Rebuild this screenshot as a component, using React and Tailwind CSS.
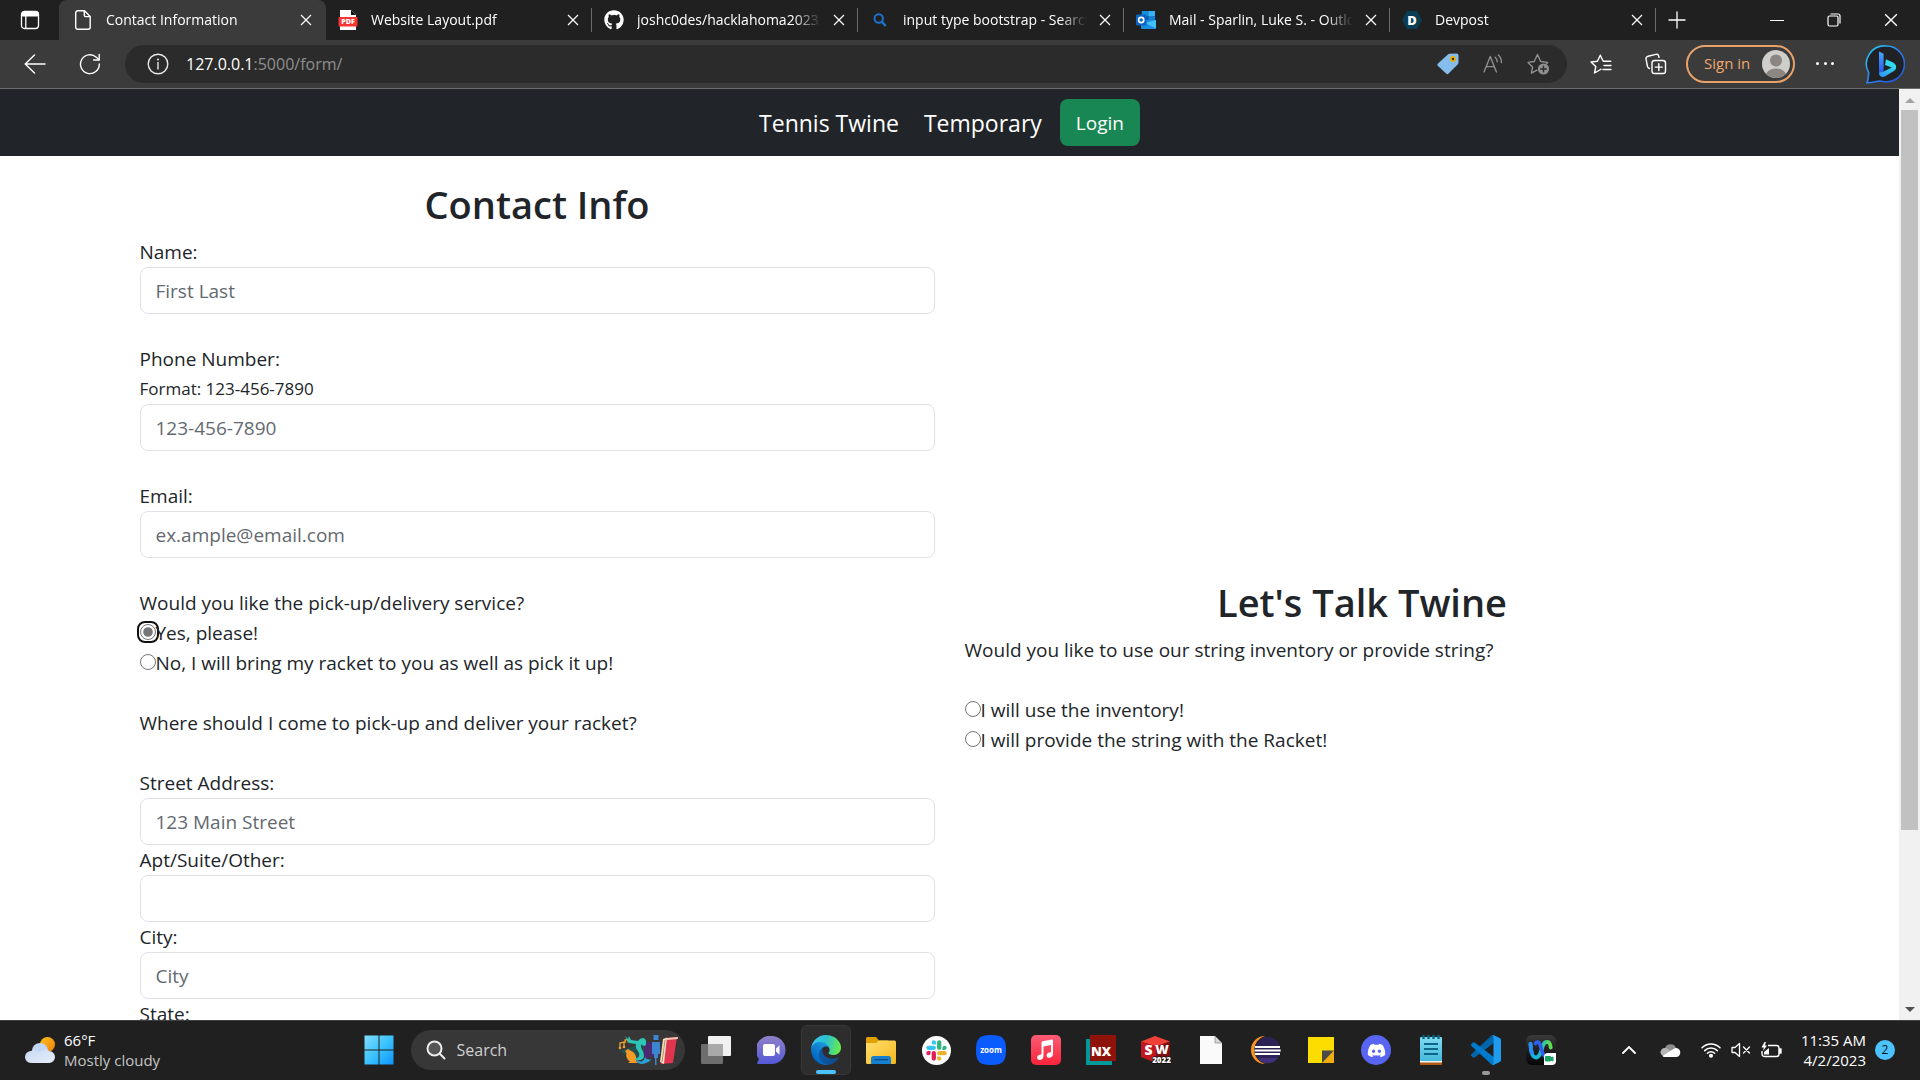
import React, { useState } from "react";
import { FaGithub, FaDiscord } from "react-icons/fa";

/* ---------- browser icons ---------- */

function TabActionsIcon() {
  return (
    <svg width="20" height="20" viewBox="0 0 20 20" fill="none" stroke="#fff">
      <rect x="1.5" y="1.5" width="17" height="17" rx="3" strokeWidth="1.3" />
      <path d="M1.5 6V4.5a3 3 0 0 1 3-3h11a3 3 0 0 1 3 3V6z" fill="#fff" />
      <path d="M5.8 6v12.5" strokeWidth="1.3" />
    </svg>
  );
}

function PageIcon() {
  return (
    <svg width="16" height="20" viewBox="0 0 16 20" fill="none" stroke="#fff" strokeWidth="1.4" strokeLinejoin="round">
      <path d="M2.7.8h6.8l5.7 5.6v10.9a2 2 0 0 1-2 2H2.7a2 2 0 0 1-2-2V2.8a2 2 0 0 1 2-2z" />
      <path d="M9.3 1v4a1.6 1.6 0 0 0 1.6 1.6h4" />
    </svg>
  );
}

function PdfIcon() {
  return (
    <svg width="20" height="20" viewBox="0 0 20 20">
      <path d="M2 0h11l5 5v15H2z" fill="#fff" />
      <path d="M13 0l5 5h-5z" fill="#111" />
      <rect x="0.5" y="7" width="19" height="9.5" rx="1" fill="#f93434" />
      <text x="10" y="14.2" fontSize="7" fontWeight="800" fill="#fff" textAnchor="middle" fontFamily="Open Sans, sans-serif">PDF</text>
    </svg>
  );
}

function BlueSearchIcon() {
  return (
    <svg width="14" height="14" viewBox="0 0 14 14" fill="none" stroke="#1a73d0" strokeWidth="2">
      <circle cx="5.7" cy="5.5" r="4.2" />
      <path d="M8.8 8.8l4 4.2" strokeWidth="2.4" />
    </svg>
  );
}

function OutlookIcon() {
  return (
    <svg width="20" height="20" viewBox="0 0 20 20">
      <rect x="5.5" y="1" width="13.5" height="11" rx="1" fill="#0a5aa8" />
      <rect x="6" y="1" width="6.5" height="5" fill="#1490df" />
      <rect x="12.5" y="1" width="6.5" height="5" fill="#35b2f2" />
      <rect x="12.5" y="6" width="6.5" height="5" fill="#1681d4" />
      <path d="M5 10l15 0v8a1 1 0 0 1-1 1H6a1 1 0 0 1-1-1z" fill="#1a8fe3" />
      <path d="M20 10v8.5L9 13z" fill="#45c0f7" />
      <rect x="0" y="4.5" width="10.5" height="11" rx="1" fill="#0a66c2" />
      <circle cx="5.2" cy="10" r="2.6" fill="none" stroke="#fff" strokeWidth="1.6" />
    </svg>
  );
}

function DevpostIcon() {
  return (
    <svg width="20" height="18" viewBox="0 0 20 18">
      <path d="M5 0h10l5 9-5 9H5L0 9z" fill="#0a3e54" />
      <text x="10" y="13.6" fontSize="13" fontWeight="800" fill="#fff" textAnchor="middle" fontFamily="Open Sans, sans-serif">D</text>
    </svg>
  );
}

function CloseIcon({ size = 12 }) {
  return (
    <svg width={size} height={size} viewBox="0 0 12 12" stroke="#fff" strokeWidth="1.2">
      <path d="M1 1l10 10M11 1L1 11" />
    </svg>
  );
}

function PlusIcon() {
  return (
    <svg width="18" height="18" viewBox="0 0 18 18" stroke="#fff" strokeWidth="1.3">
      <path d="M9 .5v17M.5 9h17" />
    </svg>
  );
}

function BackIcon() {
  return (
    <svg width="22" height="20" viewBox="0 0 22 20" fill="none" stroke="#fff" strokeWidth="1.4" strokeLinecap="round" strokeLinejoin="round">
      <path d="M21 10H1.5M10.5 1L1.2 10l9.3 9" />
    </svg>
  );
}

function ReloadIcon() {
  return (
    <svg width="22" height="22" viewBox="0 0 22 22" fill="none" stroke="#fff" strokeWidth="1.4" strokeLinecap="round" strokeLinejoin="round">
      <path d="M20.3 11a9.4 9.4 0 1 1-3-6.7l2.7 2.5" />
      <path d="M20.2 1.4v5.6h-5.6" />
    </svg>
  );
}

function InfoIcon() {
  return (
    <svg width="22" height="22" viewBox="0 0 22 22" fill="none" stroke="#e8e8e8" strokeWidth="1.4">
      <circle cx="11" cy="11" r="9.8" />
      <path d="M11 9.5V16" strokeLinecap="round" />
      <circle cx="11" cy="6.6" r="1" fill="#e8e8e8" stroke="none" />
    </svg>
  );
}

function TagIcon() {
  return (
    <svg width="22" height="22" viewBox="0 0 22 22">
      <path d="M12.5.8L19.5.6a2 2 0 0 1 2 2v7.2a2 2 0 0 1-.6 1.4L11.6 20.6a1.8 1.8 0 0 1-2.5 0L1 13a1.8 1.8 0 0 1 0-2.6l9.9-9a2.4 2.4 0 0 1 1.6-.6z" fill="#86bdec" />
      <circle cx="16" cy="6" r="2.9" fill="#e8b100" />
      <circle cx="16" cy="6" r="1.2" fill="#3b2f12" />
    </svg>
  );
}

function ReadAloudIcon() {
  return (
    <svg width="22" height="20" viewBox="0 0 22 20" fill="none" stroke="#8f8f8f" strokeWidth="1.4" strokeLinecap="round" strokeLinejoin="round">
      <path d="M2 18L8.3 2.5 14.4 18M4.2 12.6h8.2" />
      <path d="M13.2 3.2a6 6 0 0 1 2 4.6M16.4 1a10 10 0 0 1 3 7.6" />
    </svg>
  );
}

function StarAddIcon() {
  return (
    <svg width="23" height="22" viewBox="0 0 23 22" fill="none" stroke="#8f8f8f" strokeWidth="1.4" strokeLinejoin="round" strokeLinecap="round">
      <path d="M10 17.2l-5.6 3 1.2-6.3L1 9.4l6.2-.9L10.5 1.5l3.2 7 7 .9-2 2" />
      <circle cx="16.5" cy="16" r="5.6" fill="#8f8f8f" stroke="none" />
      <path d="M16.5 13.200v5.6M13.7 16h5.6" stroke="#2b2b2b" />
    </svg>
  );
}

function FavoritesIcon() {
  return (
    <svg width="22" height="20" viewBox="0 0 22 20" fill="none" stroke="#fff" strokeWidth="1.4" strokeLinejoin="round" strokeLinecap="round">
      <path d="M10.5 15.5l-6 3.5 1.3-6.5L1 8l6.4-.8L10.3 1.2l2.9 6h7.6M14 11.5h7M13 15.5h8M10.5 15.5l.5-.3" />
    </svg>
  );
}

function CollectionsIcon() {
  return (
    <svg width="22" height="22" viewBox="0 0 22 22" fill="none" stroke="#fff" strokeWidth="1.4" strokeLinecap="round" strokeLinejoin="round">
      <rect x="7" y="7.5" width="13.5" height="13" rx="2.6" />
      <path d="M13.8 10.6v7M10.3 14.1h7" />
      <path d="M4.5 15.5a3 3 0 0 1-2-2L1.1 6.3a2.5 2.5 0 0 1 1.9-3l7.8-1.9a2.5 2.5 0 0 1 3 1.8l.2 1.2" />
    </svg>
  );
}

function BingIcon() {
  return (
    <svg width="40" height="40" viewBox="0 0 40 40">
      <defs>
        <linearGradient id="bingRing" x1="0" y1="0" x2="1" y2="1">
          <stop offset="0" stopColor="#22d3ee" />
          <stop offset="0.5" stopColor="#2f80f0" />
          <stop offset="1" stopColor="#1d4ed8" />
        </linearGradient>
        <linearGradient id="bingStem" x1="0" y1="0" x2="0" y2="1">
          <stop offset="0" stopColor="#48a8ff" />
          <stop offset="1" stopColor="#2350e8" />
        </linearGradient>
        <linearGradient id="bingBowl" x1="1" y1="0" x2="0" y2="1">
          <stop offset="0" stopColor="#2fe3e8" />
          <stop offset="1" stopColor="#2f8cf5" />
        </linearGradient>
      </defs>
      <path d="M21 2a18 18 0 1 1-4.500 35.300c-4-1-8 1.700-14.500 1.400 1.700-3.500 1.200-6 1.700-10A18 18 0 0 1 21 2z" fill="#202124" stroke="url(#bingRing)" strokeWidth="1.6" />
      <path d="M14 7.500l4.600 2.200v17.100L14 31z" fill="url(#bingStem)" />
      <path d="M21 15.200l7 3.200a5.600 5.600 0 0 1 2.800 6.600L20 21z" fill="#2fd8ec" />
      <path d="M14 28.800c0 4 3.600 5 6.200 3.500l8.700-5.200a5 5 0 0 0 1.800-5.600l-11.500 5.800z" fill="url(#bingBowl)" />
    </svg>
  );
}

/* ---------- taskbar icons ---------- */

function WeatherIcon() {
  return (
    <svg width="30" height="26" viewBox="0 0 30 26">
      <defs>
        <linearGradient id="sun" x1="0" y1="0" x2="1" y2="1">
          <stop offset="0" stopColor="#fcc419" />
          <stop offset="1" stopColor="#f07c0c" />
        </linearGradient>
        <linearGradient id="cloud" x1="0" y1="0" x2="1" y2="1">
          <stop offset="0" stopColor="#c8d8f4" />
          <stop offset="1" stopColor="#e6eefb" />
        </linearGradient>
      </defs>
      <circle cx="22.5" cy="7.5" r="7.5" fill="url(#sun)" />
      <circle cx="15" cy="14" r="8" fill="#c3d5f5" />
      <path d="M6 14a6 6 0 0 1 8 1.500A7 7 0 0 1 24 14a6 6 0 0 1 0 12H6a6 6 0 0 1 0-12z" fill="url(#cloud)" />
    </svg>
  );
}

function WindowsIcon() {
  return (
    <svg width="30" height="30" viewBox="0 0 30 30">
      <defs>
        <linearGradient id="win" x1="0" y1="0" x2="30" y2="30" gradientUnits="userSpaceOnUse">
          <stop offset="0" stopColor="#84deff" />
          <stop offset="0.5" stopColor="#3cc3fc" />
          <stop offset="1" stopColor="#0a93fb" />
        </linearGradient>
      </defs>
      <path d="M.5.5h14v14H.5zM15.5.5h14v14h-14zM.5 15.5h14v14H.5zM15.5 15.5h14v14h-14z" fill="url(#win)" />
    </svg>
  );
}

function LensIcon() {
  return (
    <svg width="20" height="20" viewBox="0 0 20 20" fill="none" stroke="#ececec" strokeWidth="2" strokeLinecap="round">
      <circle cx="8.5" cy="8.5" r="7" fill="#555" />
      <path d="M13.8 13.8l4.7 4.7" />
    </svg>
  );
}

function SearchArt() {
  return (
    <svg width="62" height="32" viewBox="0 0 62 32">
      <path d="M2 17l26-9v13L12 24z" fill="#24504f" />
      <path d="M26 9l10-1v14l-10 3z" fill="#4b2a72" />
      <g stroke="#f2a22c" strokeWidth="1.3" fill="none">
        <path d="M2 14V9l4-1v5M7 9V6l3-.5v3" />
      </g>
      <circle cx="2" cy="14" r="1.3" fill="#f2a22c" />
      <circle cx="6" cy="13" r="1.3" fill="#f2a22c" />
      <path d="M7 17l3-2 3 2c4 1 6 6 5 10l2 2H10l2-1.500C8 25 8 21 8.500 19z" fill="#f59a23" />
      <path d="M7 2l3 3 1-3 2 4 7 1c3-4 7-4 8 0 .5 2 0 4-1 5-2 0-3-2-4-1-1 3 3 6 3 11 0 4-5 5-8 4l-1-2c3 0 5-1 4-5-1-3-4-4-3-9l-7-1-2-3z" fill="#2ec4b6" />
      <path d="M18 25c3 4 8 3 9-2 1 2 4 3 6 2-1 3-5 4-8 5-3 0-7-1-7-5z" fill="#2a9fd8" />
      <path d="M35.5 1h5v5h-5zM34 8h8v12h-2v4h-1.500v7h-1.500v-7H36v-4h-2z" fill="#3b86cf" />
      <path d="M47 4l12-1-4 26-12 1z" fill="#e0344f" />
      <path d="M45 5l4-1.500L46 30l-4-2z" fill="#f1dfc0" />
      <path d="M49 4l11-1-.3 2-11 1z" fill="#f7c9b4" />
      <path d="M47 6l-3 22" stroke="#9c6b4a" strokeWidth="0.7" />
    </svg>
  );
}

function TaskViewIcon() {
  return (
    <svg width="30" height="28" viewBox="0 0 30 28">
      <rect x="7" y="0" width="23" height="20" rx="1" fill="#f1f1f1" />
      <rect x="0" y="8" width="22" height="20" rx="1" fill="#7c7c7c" fillOpacity="0.85" />
      <path d="M7 8h15v12H7z" fill="#a9a9a9" />
    </svg>
  );
}

function ChatIcon() {
  return (
    <svg width="29" height="29" viewBox="0 0 29 29">
      <defs>
        <linearGradient id="chat" x1="0" y1="0" x2="0" y2="1">
          <stop offset="0" stopColor="#8f80c8" />
          <stop offset="1" stopColor="#5459d6" />
        </linearGradient>
      </defs>
      <path d="M14.500 0a14 14 0 0 1 0 28H1c-1 0-1.200-.800-.7-1.500L2 23A14 14 0 0 1 14.500 0z" fill="url(#chat)" />
      <rect x="6" y="8" width="12" height="12" rx="2" fill="#fff" />
      <path d="M19 12.500l3.500-3.200v9.400L19 15.500z" fill="#fff" />
    </svg>
  );
}

function EdgeIcon() {
  return (
    <svg width="30" height="30" viewBox="0 0 256 256">
      <defs>
        <linearGradient id="edgeA" x1="63" y1="177" x2="241" y2="177" gradientUnits="userSpaceOnUse">
          <stop offset="0" stopColor="#0c59a4" />
          <stop offset="1" stopColor="#114a8b" />
        </linearGradient>
        <linearGradient id="edgeB" x1="157" y1="90" x2="46" y2="220" gradientUnits="userSpaceOnUse">
          <stop offset="0" stopColor="#1b9de2" />
          <stop offset="0.5" stopColor="#1280d0" />
          <stop offset="1" stopColor="#0067c0" />
        </linearGradient>
        <linearGradient id="edgeC" x1="20" y1="60" x2="250" y2="110" gradientUnits="userSpaceOnUse">
          <stop offset="0" stopColor="#35c1f1" />
          <stop offset="0.5" stopColor="#2cc3c9" />
          <stop offset="1" stopColor="#66eb4b" />
        </linearGradient>
      </defs>
      <g transform="translate(-4.63 -4.92)">
        <path d="M235.680 195.460a93.730 93.730 0 0 1-10.540 4.710 101.870 101.870 0 0 1-35.900 6.460c-47.320 0-88.540-32.550-88.540-74.320A31.480 31.480 0 0 1 117.130 105c-42.800 1.800-53.800 46.400-53.800 72.530 0 73.880 68.090 81.370 82.760 81.370 7.910 0 19.840-2.300 27-4.560l1.310-.44a128.340 128.340 0 0 0 66.600-52.800 4 4 0 0 0-5.320-5.640Z" fill="url(#edgeA)" />
        <path d="M110.340 246.340A79.200 79.200 0 0 1 87.600 225a80.720 80.720 0 0 1 29.530-120c3.120-1.470 8.450-4.130 15.540-4a32.350 32.350 0 0 1 25.690 13 31.880 31.880 0 0 1 6.360 18.660c0-.21 24.460-79.600-80-79.600-43.900 0-80 41.660-80 78.210a130.150 130.150 0 0 0 12.110 56 128 128 0 0 0 156.380 67.110 75.550 75.550 0 0 1-62.780-8Z" fill="url(#edgeB)" />
        <path d="M156.940 153.780c-.81 1.050-3.300 2.500-3.300 5.660 0 2.610 1.700 5.120 4.720 7.230 14.380 10 41.490 8.680 41.560 8.680a59.560 59.560 0 0 0 30.270-8.350 61.380 61.380 0 0 0 30.430-52.880c.26-22.410-8-37.310-11.340-43.910C228.090 28.760 182.350 4.920 132.610 4.920a128 128 0 0 0-128 126.200c.48-36.540 36.800-66.050 80-66.050 3.500 0 23.460.34 42 10.070 16.340 8.580 24.900 18.940 30.850 29.210 6.180 10.670 7.280 24.150 7.280 29.520s-2.740 13.330-7.800 19.910Z" fill="url(#edgeC)" />
      </g>
    </svg>
  );
}

function FolderIcon() {
  return (
    <svg width="30" height="27" viewBox="0 0 30 27">
      <defs>
        <linearGradient id="folder" x1="0" y1="0" x2="1" y2="1">
          <stop offset="0" stopColor="#ffdf70" />
          <stop offset="1" stopColor="#f7b71c" />
        </linearGradient>
      </defs>
      <path d="M0 1.500A1.500 1.500 0 0 1 1.500 0H10l3 3.500H22V8H0z" fill="#e0a000" />
      <path d="M0 6h10l3-2.500h15.500A1.500 1.500 0 0 1 30 5v20.500a1.500 1.500 0 0 1-1.500 1.500h-27A1.500 1.500 0 0 1 0 25.500z" fill="url(#folder)" />
      <path d="M5 27v-5.500a2.500 2.500 0 0 1 2.500-2.500h15a2.500 2.500 0 0 1 2.500 2.500V27z" fill="#1580d0" />
      <path d="M9 22.700h12.500" stroke="#0b4c86" strokeWidth="1.2" strokeLinecap="round" />
    </svg>
  );
}

function SlackIcon() {
  return (
    <svg width="29" height="29" viewBox="0 0 34 34">
      <circle cx="17" cy="17" r="17" fill="#fff" />
      <g transform="translate(5 5)">
        <path fill="#E01E5A" d="M5.042 15.165a2.528 2.528 0 0 1-2.520 2.523A2.528 2.528 0 0 1 0 15.165a2.527 2.527 0 0 1 2.522-2.520h2.520v2.520zM6.313 15.165a2.527 2.527 0 0 1 2.521-2.520 2.527 2.527 0 0 1 2.521 2.520v6.313A2.528 2.528 0 0 1 8.834 24a2.528 2.528 0 0 1-2.521-2.522v-6.313z" />
        <path fill="#36C5F0" d="M8.834 5.042a2.528 2.528 0 0 1-2.521-2.520A2.528 2.528 0 0 1 8.834 0a2.528 2.528 0 0 1 2.521 2.522v2.520H8.834zM8.834 6.313a2.528 2.528 0 0 1 2.521 2.521 2.528 2.528 0 0 1-2.521 2.521H2.522A2.528 2.528 0 0 1 0 8.834a2.528 2.528 0 0 1 2.522-2.521h6.312z" />
        <path fill="#2EB67D" d="M18.956 8.834a2.528 2.528 0 0 1 2.522-2.521A2.528 2.528 0 0 1 24 8.834a2.528 2.528 0 0 1-2.522 2.521h-2.522V8.834zM17.688 8.834a2.528 2.528 0 0 1-2.523 2.521 2.527 2.527 0 0 1-2.520-2.521V2.522A2.527 2.527 0 0 1 15.165 0a2.528 2.528 0 0 1 2.523 2.522v6.312z" />
        <path fill="#ECB22E" d="M15.165 18.956a2.528 2.528 0 0 1 2.523 2.522A2.528 2.528 0 0 1 15.165 24a2.527 2.527 0 0 1-2.520-2.522v-2.522h2.520zM15.165 17.688a2.527 2.527 0 0 1-2.520-2.523 2.526 2.526 0 0 1 2.520-2.520h6.313A2.527 2.527 0 0 1 24 15.165a2.528 2.528 0 0 1-2.522 2.523h-6.313z" />
      </g>
    </svg>
  );
}

function ZoomIcon() {
  return (
    <svg width="30" height="30" viewBox="0 0 30 30">
      <path d="M15 0c12 0 15 4 15 15s-3 15-15 15S0 26 0 15 3 0 15 0z" fill="#0b5cff" />
      <text x="15" y="17.8" fontSize="8" fontWeight="700" fill="#fff" textAnchor="middle" fontFamily="Open Sans, sans-serif">zoom</text>
    </svg>
  );
}

function MusicIcon() {
  return (
    <svg width="30" height="30" viewBox="0 0 30 30">
      <defs>
        <linearGradient id="music" x1="0" y1="0" x2="0" y2="1">
          <stop offset="0" stopColor="#fb5c74" />
          <stop offset="1" stopColor="#fa233b" />
        </linearGradient>
      </defs>
      <rect width="30" height="30" rx="5" fill="url(#music)" />
      <path d="M10.500 7.500a1.300 1.300 0 0 1 1-1.200l9.300-1.900c.8-.1 1.200.3 1.200 1v13.200c0 2.700-1.400 3.900-3.200 4.200-2 .3-3.200-.9-3.200-2.400 0-1.600 1.200-2.500 2.700-2.800l1-.2c.5-.1.700-.4.700-.9V10l-7.500 1.600v9.200c0 2.700-1.400 3.900-3.200 4.200-2 .3-3.200-.9-3.200-2.400 0-1.600 1.200-2.500 2.700-2.800l1-.2c.5-.1.700-.4.700-.9z" fill="#fff" />
    </svg>
  );
}

function NxIcon() {
  return (
    <svg width="30" height="30" viewBox="0 0 30 30">
      <rect x="0" y="4" width="26" height="26" fill="#009999" />
      <rect x="4" y="0" width="26" height="26" fill="#8e130b" />
      <text x="15" y="21" fontSize="13" fontWeight="800" fill="#fff" textAnchor="middle" fontFamily="Open Sans, sans-serif">NX</text>
    </svg>
  );
}

function SolidWorksIcon() {
  return (
    <svg width="30" height="30" viewBox="0 0 30 30">
      <path d="M14 1l15 5.500-14 5L0 6.500z" fill="#f04038" />
      <path d="M0 6.500l15 5V28L0 22z" fill="#c11820" />
      <path d="M15 11.500l14-5V22L15 28z" fill="#7d0e14" />
      <text x="7.5" y="20" fontSize="14" fontWeight="800" fill="#fff" textAnchor="middle" fontFamily="Open Sans, sans-serif">S</text>
      <text x="21" y="19" fontSize="13" fontWeight="800" fill="#fff" textAnchor="middle" fontFamily="Open Sans, sans-serif">W</text>
      <text x="20.5" y="28" fontSize="8" fontWeight="800" fill="#fff" stroke="#111" strokeWidth="1.5" paintOrder="stroke" textAnchor="middle" fontFamily="Open Sans, sans-serif">2022</text>
    </svg>
  );
}

function BlankFileIcon() {
  return (
    <svg width="22" height="28" viewBox="0 0 22 28">
      <path d="M0 0h15l7 7v21H0z" fill="#fafafa" />
      <path d="M15 0v7h7z" fill="#d9d9d9" stroke="#777" strokeWidth="0.6" />
    </svg>
  );
}

function EclipseIcon() {
  return (
    <svg width="30" height="28" viewBox="0 0 30 28">
      <path d="M14 0A14 14 0 0 0 14 28 14.500 14.500 0 0 1 14 0z" fill="#f7941e" />
      <circle cx="16.5" cy="14" r="13" fill="#2c2255" />
      <path d="M6 22a13 13 0 0 0 21 0z" fill="#41307c" />
      <path d="M4 10h25v2H4zM3.500 13.500h26.200v2H3.500zM4 17h25v2H4z" fill="#fff" />
    </svg>
  );
}

function StickyIcon() {
  return (
    <svg width="26" height="26" viewBox="0 0 26 26">
      <path d="M0 0h26v14L14 26H0z" fill="#fddc00" />
      <path d="M14 26V13.500h12z" fill="#4a4a4a" />
      <path d="M14 26l12-12.500V26z" fill="#f0ad0c" />
    </svg>
  );
}

function DiscordIcon() {
  return (
    <span className="flex h-[30px] w-[30px] items-center justify-center rounded-full bg-[#5865f2] text-white">
      <FaDiscord size={19} />
    </span>
  );
}

function NotepadIcon() {
  return (
    <svg width="22" height="30" viewBox="0 0 22 30">
      <defs>
        <linearGradient id="note" x1="0" y1="0" x2="0" y2="1">
          <stop offset="0" stopColor="#80dbf0" />
          <stop offset="1" stopColor="#45b9dc" />
        </linearGradient>
      </defs>
      <rect x="0" y="25" width="22" height="5" fill="#b25a12" />
      <rect x="0" y="24" width="22" height="3.5" fill="#f4f4f4" />
      <rect x="0" y="2" width="22" height="24" rx="1" fill="url(#note)" />
      <path d="M3.500 0v4M8.500 0v4M13.500 0v4M18.500 0v4" stroke="#0b6586" strokeWidth="2.4" />
      <path d="M4 9h14M4 14h14M4 19h14" stroke="#0b6586" strokeWidth="1.8" />
    </svg>
  );
}

function VsCodeIcon() {
  return (
    <svg width="30" height="30" viewBox="0 0 100 100">
      <path fill="#0065A9" d="M96.461 10.796L75.857.876a6.230 6.230 0 0 0-7.107 1.207l-67.451 61.500a4.167 4.167 0 0 0 .004 6.162l5.510 5.009a4.167 4.167 0 0 0 5.320.236l81.228-61.620c2.725-2.067 6.639-.124 6.639 3.297v-.240a6.250 6.250 0 0 0-3.539-5.630z" />
      <path fill="#007ACC" d="M96.461 89.204l-20.604 9.920a6.229 6.229 0 0 1-7.107-1.207l-67.451-61.500a4.167 4.167 0 0 1 .004-6.162l5.510-5.009a4.167 4.167 0 0 1 5.320-.236l81.228 61.620c2.725 2.068 6.639.124 6.639-3.297v.240a6.250 6.250 0 0 1-3.539 5.630z" />
      <path fill="#1F9CF0" d="M75.858 99.126a6.232 6.232 0 0 1-7.108-1.210c2.306 2.307 6.250.673 6.250-2.588V4.672c0-3.262-3.944-4.895-6.250-2.589a6.232 6.232 0 0 1 7.108-1.210l20.600 9.908A6.250 6.250 0 0 1 100 16.413v67.174a6.250 6.250 0 0 1-3.541 5.633l-20.601 9.906z" />
    </svg>
  );
}

function WebexIcon() {
  return (
    <svg width="30" height="30" viewBox="0 0 30 30" fill="none">
      <defs>
        <linearGradient id="wxBg" x1="0" y1="0" x2="0" y2="1">
          <stop offset="0" stopColor="#3a3a3a" />
          <stop offset="1" stopColor="#050505" />
        </linearGradient>
        <linearGradient id="wxBand" x1="4" y1="0" x2="25" y2="0" gradientUnits="userSpaceOnUse">
          <stop offset="0" stopColor="#07b8f0" />
          <stop offset="0.5" stopColor="#1fb9c9" />
          <stop offset="1" stopColor="#63e04a" />
        </linearGradient>
      </defs>
      <rect width="30" height="30" rx="6" fill="url(#wxBg)" />
      <path d="M4.500 9c.3 8 2 13.500 5.500 13.500S15 17 16.500 12s3-5 5-5 2.700 2 3.200 5.500" stroke="url(#wxBand)" strokeWidth="3.8" strokeLinecap="round" />
      <path d="M4.500 9c.2 4 .7 7 1.500 9" stroke="#2b8cf5" strokeWidth="3.8" strokeLinecap="round" />
      <path d="M9.500 8.500c1-2 3.500-2 4.500 1 1.500 4 2.500 12 6 12.500" stroke="#2f5fee" strokeWidth="3.6" strokeLinecap="round" />
      <path d="M22 18h8v8a4 4 0 0 1-4 4h-8v-8a4 4 0 0 1 4-4z" fill="#fff" />
      <path d="M19.500 21.500h5v4.500h-5zM24.500 23l2.500-1v4l-2.500-1z" fill="#17a566" stroke="#17a566" strokeWidth="1" />
    </svg>
  );
}

function CloudTrayIcon() {
  return (
    <svg width="21" height="14" viewBox="0 0 21 14">
      <path d="M5 5a6 6 0 0 1 11-.5L10 9 2 12A4 4 0 0 1 5 5z" fill="#8e8e8e" />
      <path d="M1 11a4.500 4.500 0 0 1 5-6l7 4-9 5z" fill="#b5b5b5" />
      <path d="M2.500 13L15 5a4.500 4.500 0 0 1 1.500 9H4.500a4 4 0 0 1-2-1z" fill="#fff" />
    </svg>
  );
}

function WifiIcon() {
  return (
    <svg width="20" height="16" viewBox="0 0 20 16" fill="none" stroke="#fff" strokeWidth="1.5" strokeLinecap="round">
      <path d="M1 5.800a12.700 12.700 0 0 1 18 0M3.700 8.600a8.900 8.900 0 0 1 12.600 0M6.400 11.300a5.100 5.100 0 0 1 7.200 0" />
      <circle cx="10" cy="13.8" r="1.3" fill="#fff" />
    </svg>
  );
}

function MuteIcon() {
  return (
    <svg width="20" height="16" viewBox="0 0 20 16" fill="none" stroke="#fff" strokeWidth="1.3" strokeLinecap="round" strokeLinejoin="round">
      <path d="M1 5.500h3L8.500 1.500v13L4 10.500H1z" />
      <path d="M12.500 5l6 6M18.500 5l-6 6" />
    </svg>
  );
}

function BatteryIcon() {
  return (
    <svg width="21" height="16" viewBox="0 0 21 16" fill="none" stroke="#fff" strokeWidth="1.4" strokeLinejoin="round">
      <path d="M7 3.500h8.500a2.500 2.500 0 0 1 2.500 2.500v6a2.500 2.500 0 0 1-2.500 2.500h-12a2.500 2.500 0 0 1-2.500-2.500V9" />
      <path d="M18.500 7h1.500v4h-1.500z" fill="#fff" />
      <path d="M3 12.500V10l5-4v6.500z" fill="#fff" stroke="none" />
      <path d="M3.500 0L.5 5.500h2.300L2 9l4-5.500H3.800L5 0z" fill="#fff" stroke="none" />
    </svg>
  );
}

/* ---------- browser chrome ---------- */

const tabs = [
  { title: "Contact Information", icon: <PageIcon />, active: true },
  { title: "Website Layout.pdf", icon: <PdfIcon /> },
  { title: "joshc0des/hacklahoma2023:", icon: <FaGithub size={20} color="#fff" /> },
  { title: "input type bootstrap - Search", icon: <BlueSearchIcon /> },
  { title: "Mail - Sparlin, Luke S. - Outlook", icon: <OutlookIcon /> },
  { title: "Devpost", icon: <DevpostIcon /> },
];

function Tab({ title, icon, active }) {
  return (
    <div
      className={
        active
          ? "flex h-10 max-w-[267px] min-w-0 flex-1 items-center rounded-t-lg bg-[#3b3b3b] pr-[10px] pl-[14px]"
          : "flex h-10 max-w-[266px] min-w-0 flex-1 items-center pl-3"
      }
    >
      <span className="flex w-5 shrink-0 justify-center">{icon}</span>
      <span className="ml-[13px] min-w-0 flex-1 overflow-hidden mask-r-from-85% text-sm whitespace-nowrap text-white">{title}</span>
      <button type="button" aria-label={"Close " + title} className="ml-2 flex h-6 w-5 shrink-0 items-center justify-center">
        <CloseIcon />
      </button>
      {!active && <span className="ml-2 h-6 w-px bg-[#6b6b6b]" />}
    </div>
  );
}

function TabBar() {
  return (
    <div className="flex h-10 shrink-0 items-center bg-[#202020]">
      <button type="button" aria-label="Tab actions menu" className="flex h-10 w-[59px] shrink-0 items-center justify-center">
        <TabActionsIcon />
      </button>
      <div className="flex min-w-0 flex-1 items-center">
        {tabs.map((t) => (
          <Tab key={t.title} {...t} />
        ))}
        <button type="button" aria-label="New tab" className="ml-[11px] flex h-10 w-5 shrink-0 items-center justify-center">
          <PlusIcon />
        </button>
      </div>
      <div className="flex shrink-0">
        <button type="button" aria-label="Minimize" className="flex h-10 w-[57px] items-center justify-center">
          <span className="h-px w-3.5 bg-white" />
        </button>
        <button type="button" aria-label="Restore" className="flex h-10 w-[57px] items-center justify-center">
          <svg width="14" height="14" viewBox="0 0 14 14" fill="none" stroke="#fff" strokeWidth="1.2">
            <rect x="1" y="3" width="10" height="10" rx="1.5" />
            <path d="M3.500 1h7.500a2 2 0 0 1 2 2v7.500" />
          </svg>
        </button>
        <button type="button" aria-label="Close window" className="flex h-10 w-[58px] items-center justify-center">
          <CloseIcon size={14} />
        </button>
      </div>
    </div>
  );
}

function Toolbar() {
  return (
    <div className="flex h-[49px] shrink-0 items-center border-b border-[#6c6c6c] bg-[#3b3b3b] pb-px">
      <button type="button" aria-label="Back" className="ml-4 flex w-[37px] justify-center">
        <BackIcon />
      </button>
      <button type="button" aria-label="Refresh" className="ml-[18px] flex w-[37px] justify-center">
        <ReloadIcon />
      </button>
      <div className="ml-[17px] flex h-[38px] min-w-0 flex-1 items-center rounded-full bg-[#2b2b2b] pr-[17px] pl-[22px]">
        <button type="button" aria-label="View site information">
          <InfoIcon />
        </button>
        <a href="#form" className="ml-[17px] flex-1 text-base text-[#8f8f8f]">
          <span className="text-white">127.0.0.1</span>:5000/form/
        </a>
        <div className="flex items-center gap-[23px]">
          <button type="button" aria-label="Shopping"><TagIcon /></button>
          <button type="button" aria-label="Read aloud"><ReadAloudIcon /></button>
          <button type="button" aria-label="Add to favorites"><StarAddIcon /></button>
        </div>
      </div>
      <button type="button" aria-label="Favorites" className="ml-[23px]"><FavoritesIcon /></button>
      <button type="button" aria-label="Collections" className="ml-[33px]"><CollectionsIcon /></button>
      <button type="button" className="ml-[19px] flex h-[38px] w-[109px] items-center justify-between rounded-full border-2 border-[#e8a26b] pr-[3px] pl-4 text-[15px] text-[#f0a870]">
        Sign in
        <svg width="28" height="28" viewBox="0 0 28 28">
          <defs>
            <clipPath id="avatar"><circle cx="14" cy="14" r="14" /></clipPath>
          </defs>
          <g clipPath="url(#avatar)">
            <rect width="28" height="28" fill="#d0cecb" />
            <circle cx="14" cy="10.5" r="6" fill="#8b8682" />
            <ellipse cx="14" cy="26" rx="10.5" ry="7.5" fill="#8b8682" />
          </g>
        </svg>
      </button>
      <button type="button" aria-label="Settings and more" className="ml-[21px] flex h-6 w-[18px] items-center justify-between">
        <span className="h-[3px] w-[3px] rounded-full bg-white" />
        <span className="h-[3px] w-[3px] rounded-full bg-white" />
        <span className="h-[3px] w-[3px] rounded-full bg-white" />
      </button>
      <button type="button" aria-label="Discover" className="mr-[15px] ml-[31px]"><BingIcon /></button>
    </div>
  );
}

/* ---------- web page ---------- */

function TextField({ id, label, hint, placeholder, type = "text" }) {
  return (
    <div>
      <label htmlFor={id} className="block">{label}</label>
      {hint && <small className="block text-[17px]/[30px]">{hint}</small>}
      <input
        id={id}
        type={type}
        placeholder={placeholder}
        className="block h-[47px] w-full rounded-lg border border-[#dee2e6] bg-white px-[15px] placeholder:text-[#63696f]"
      />
    </div>
  );
}

function Radio({ name, value, label, checked, onChange, focused }) {
  return (
    <label className="flex items-center">
      <span
        className={
          focused
            ? "mb-0.5 h-4 w-4 shrink-0 rounded-[5px] outline-2 outline-offset-1 outline-[#101010]"
            : "mb-0.5 h-4 w-4 shrink-0"
        }
      >
        <input
          type="radio"
          name={name}
          value={value}
          checked={checked}
          onChange={onChange}
          className="block h-4 w-4 accent-[#767676]"
        />
      </span>
      {label}
    </label>
  );
}

function Form() {
  const [service, setService] = useState("yes");
  const [twine, setTwine] = useState("");
  return (
    <form className="mx-auto grid w-full max-w-[1650px] grid-cols-2 items-center pt-6">
      <div className="px-[15px] pb-[77px]">
        <h1 className="mb-[9px] text-center text-[38px]/[48px] font-semibold">Contact Info</h1>
        <div className="flex flex-col gap-[30px]">
          <TextField id="name" label="Name:" placeholder="First Last" />
          <TextField id="phone" type="tel" label="Phone Number:" hint="Format: 123-456-7890" placeholder="123-456-7890" />
          <TextField id="email" type="email" label="Email:" placeholder="ex.ample@email.com" />
          <fieldset>
            <legend>Would you like the pick-up/delivery service?</legend>
            <Radio name="service" value="yes" label="Yes, please!" focused checked={service === "yes"} onChange={() => setService("yes")} />
            <Radio name="service" value="no" label="No, I will bring my racket to you as well as pick it up!" checked={service === "no"} onChange={() => setService("no")} />
          </fieldset>
          <p>Where should I come to pick-up and deliver your racket?</p>
          <div>
            <TextField id="street" label="Street Address:" placeholder="123 Main Street" />
            <TextField id="apt" label="Apt/Suite/Other:" />
            <TextField id="city" label="City:" placeholder="City" />
            <TextField id="state" label="State:" />
          </div>
        </div>
      </div>
      <div className="px-[15px]">
        <h1 className="mb-[9px] text-center text-[38px]/[48px] font-semibold">Let's Talk Twine</h1>
        <p className="mb-[30px]">Would you like to use our string inventory or provide string?</p>
        <Radio name="twine" value="inventory" label="I will use the inventory!" checked={twine === "inventory"} onChange={() => setTwine("inventory")} />
        <Radio name="twine" value="own" label="I will provide the string with the Racket!" checked={twine === "own"} onChange={() => setTwine("own")} />
      </div>
    </form>
  );
}

function Scrollbar() {
  return (
    <div className="flex w-[21px] shrink-0 flex-col items-center bg-[#f1f1f1]">
      <svg width="10" height="21" viewBox="0 0 10 21"><path d="M0 14l5-5 5 5z" fill="#a3a3a3" /></svg>
      <div className="flex w-full flex-1 flex-col px-[2px]">
        <div className="h-[81%] bg-[#c1c1c1]" />
      </div>
      <svg width="10" height="21" viewBox="0 0 10 21"><path d="M0 8l5 5 5-5z" fill="#505050" /></svg>
    </div>
  );
}

function WebPage() {
  return (
    <div className="flex min-h-0 flex-1 bg-white">
      <div className="min-w-0 flex-1 overflow-hidden text-[19px]/[30px] text-[#212529]">
        <nav className="flex items-center justify-center bg-[#212529] py-[10px] text-white">
          <a href="#home" className="mr-[25px] text-[23px]">Tennis Twine</a>
          <a href="#temporary" className="mr-[18px] text-[23px]">Temporary</a>
          <button type="button" className="h-[47px] rounded-lg bg-[#198754] px-4">Login</button>
        </nav>
        <Form />
      </div>
      <Scrollbar />
    </div>
  );
}

/* ---------- taskbar ---------- */

const apps = [
  { name: "Task view", icon: <TaskViewIcon /> },
  { name: "Chat", icon: <ChatIcon /> },
  { name: "Microsoft Edge", icon: <EdgeIcon />, active: true },
  { name: "File Explorer", icon: <FolderIcon /> },
  { name: "Slack", icon: <SlackIcon /> },
  { name: "Zoom", icon: <ZoomIcon /> },
  { name: "Music", icon: <MusicIcon /> },
  { name: "NX", icon: <NxIcon /> },
  { name: "SolidWorks", icon: <SolidWorksIcon /> },
  { name: "File", icon: <BlankFileIcon /> },
  { name: "Eclipse", icon: <EclipseIcon /> },
  { name: "Sticky Notes", icon: <StickyIcon /> },
  { name: "Discord", icon: <DiscordIcon /> },
  { name: "Notepad", icon: <NotepadIcon /> },
  { name: "Visual Studio Code", icon: <VsCodeIcon />, running: true },
  { name: "Webex", icon: <WebexIcon /> },
];

function AppButton({ name, icon, active, running }) {
  return (
    <button type="button" aria-label={name} className="flex w-[55px] items-center justify-center">
      <span
        className={
          active
            ? "relative flex h-[50px] w-[50px] items-center justify-center rounded-md border border-[#383838] bg-[#2d2d2d]"
            : "relative flex h-[50px] w-[50px] items-center justify-center"
        }
      >
        {icon}
        {active && <span className="absolute bottom-0 h-1 w-5 rounded-full bg-[#4cc2ff]" />}
        {running && <span className="absolute bottom-0 h-1 w-2 rounded-full bg-[#9a9a9a]" />}
      </span>
    </button>
  );
}

function Taskbar() {
  return (
    <div className="grid h-[60px] shrink-0 grid-cols-[1fr_auto_1fr] items-center border-t border-[#3f4143] bg-[#202020] pb-px text-white">
      <button type="button" className="flex items-center gap-[9px] pl-[25px] text-left text-[15px]/5">
        <WeatherIcon />
        <span>
          <span className="block">66°F</span>
          <span className="block text-[#c4c4c4]">Mostly cloudy</span>
        </span>
      </button>
      <div className="flex items-center">
        <button type="button" aria-label="Start" className="flex h-[50px] w-[55px] items-center justify-center"><WindowsIcon /></button>
        <label className="mx-1 flex h-10 w-[274px] items-center rounded-full bg-[#373737] pr-[5px] pl-[15px]">
          <LensIcon />
          <input type="search" placeholder="Search" aria-label="Search" className="ml-[11px] w-0 flex-1 bg-transparent text-base placeholder:text-[#d0d0d0]" />
          <SearchArt />
        </label>
        {apps.map((a) => (
          <AppButton key={a.name} {...a} />
        ))}
      </div>
      <div className="flex items-center justify-end pr-[25px]">
        <button type="button" aria-label="Show hidden icons" className="mr-6">
          <svg width="14" height="8" viewBox="0 0 14 8" fill="none" stroke="#fff" strokeWidth="1.8" strokeLinecap="round"><path d="M1 7l6-6 6 6" /></svg>
        </button>
        <button type="button" aria-label="OneDrive" className="mr-5"><CloudTrayIcon /></button>
        <button type="button" aria-label="Network, volume and battery" className="flex items-center gap-[10px]">
          <WifiIcon />
          <MuteIcon />
          <BatteryIcon />
        </button>
        <button type="button" className="ml-[19px] text-right text-[15px]/5">
          <span className="block">11:35 AM</span>
          <span className="block">4/2/2023</span>
        </button>
        <button type="button" aria-label="2 new notifications" className="ml-[9px] h-5 w-5 rounded-full bg-[#4cc2ff] text-xs text-[#111]">2</button>
      </div>
    </div>
  );
}

export default function App() {
  return (
    <div className="flex h-screen flex-col overflow-hidden font-['Open_Sans','Noto_Sans',sans-serif]">
      <TabBar />
      <Toolbar />
      <WebPage />
      <Taskbar />
    </div>
  );
}
